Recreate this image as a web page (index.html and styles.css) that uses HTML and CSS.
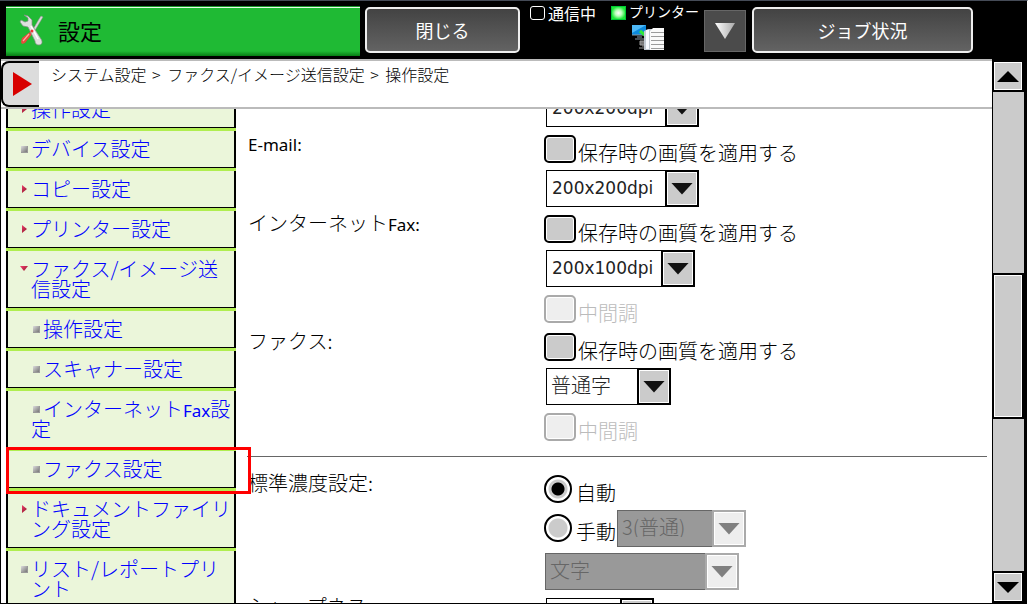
FILE: index.html
```html
<!DOCTYPE html>
<html lang="ja">

<head>
  <meta charset="UTF-8">
  <meta name="viewport" content="width=device-width, initial-scale=1.0">
  <title>設定</title>
  <link rel="stylesheet" href="styles.css">
</head>

<body>
  <header class="topbar">
    <div class="title">
      <svg class="title-icon" width="26" height="32" viewBox="0 0 26 32">
        <path d="M6 29l-2-1 12-17 2 1z" fill="#159a27"/>
        <path d="M20 5l2-3 2 1-9 15-2-1z" fill="#d9d9d9" stroke="#8d8d8d" stroke-width=".5"/>
        <path d="M11 18l3 1-8 10-3 1-1-2 1-4z" fill="#e84a3c"/>
        <path d="M10 20l-6 7" stroke="#ffaaa0" stroke-width="1.2"/>
        <path d="M5 1l4 1 4 4 0 5 9 14c2 3 1 6-2 6-3 0-4-2-4-4L9 13 4 12 1 8l1-2 4 2 3-1 0-3z" fill="#dfe1df" stroke="#858d85" stroke-width=".7"/>
        <path d="M12 12l7 13" stroke="#fff" stroke-width="1.5"/>
        <circle cx="13" cy="17" r="1.5" fill="#e33"/>
      </svg>
      <h1>設定</h1>
    </div>
    <button class="key key-close" type="button">閉じる</button>
    <div class="status">
      <div class="status-item"><span class="lamp"></span>通信中</div>
      <div class="status-item status-printer">
        <div class="status-name"><span class="lamp lamp-on"></span>プリンター</div>
        <svg class="job-icon" width="34" height="28" viewBox="0 0 34 28">
          <path d="M1 1h14v10H1z" fill="#0c89dc"/>
          <path d="M1 1h14L1 9z" fill="#4db8f7"/>
          <path d="M1 11h14M6 13h5M4 15h9" stroke="#8a9aa5" stroke-width="1"/>
          <path d="M9 7l6 5" stroke="#2ee83a" stroke-width="3"/>
          <path d="M9 17h5v4H9zM11 22h3M8 24h6" fill="#777" stroke="#999" stroke-width="1"/>
          <path d="M13 7l4-2h4v21h-8z" fill="#c3cbd3"/>
          <path d="M15 6h3v19h-3z" fill="#f8fbff"/>
          <path d="M22 4h11v22H19V7z" fill="#fafafa"/>
          <path d="M20 8.500h13M20 12.500h13M20 16.500h13M20 20.500h13M20 24.500h13" stroke="#9b9b9b" stroke-width="1"/>
        </svg>
      </div>
    </div>
    <button class="key-down" type="button" aria-label="プリンターの一覧">
      <svg width="20" height="16" viewBox="0 0 20 16">
        <defs>
          <linearGradient id="silver" x1="0" y1="0" x2="1" y2="0">
            <stop offset="0" stop-color="#fff"/>
            <stop offset="1" stop-color="#aaa"/>
          </linearGradient>
        </defs>
        <path d="M0 0h20L10 16z" fill="url(#silver)"/>
      </svg>
    </button>
    <button class="key key-job" type="button">ジョブ状況</button>
  </header>

  <div class="screen">
    <div class="page">
      <div class="pathbar">
        <button class="menu-toggle" type="button" aria-label="メニュー">
          <svg width="19" height="24" viewBox="0 0 19 24">
            <path d="M0 0l19 12L0 24z" fill="#d80000"/>
          </svg>
        </button>
        <p>システム設定 <span class="sep">&gt;</span> ファクス/イメージ送信設定 <span class="sep">&gt;</span> 操作設定</p>
      </div>

      <main class="content">
        <nav class="menu">
          <ul>
            <li><a href="#"><i class="mark closed"></i>操作設定</a></li>
            <li><a href="#"><i class="mark leaf"></i>デバイス設定</a></li>
            <li><a href="#"><i class="mark closed"></i>コピー設定</a></li>
            <li><a href="#"><i class="mark closed"></i>プリンター設定</a></li>
            <li><a href="#"><i class="mark open"></i>ファクス/イメージ送信設定</a></li>
            <li class="sub"><a href="#"><i class="mark leaf"></i>操作設定</a></li>
            <li class="sub"><a href="#"><i class="mark leaf"></i>スキャナー設定</a></li>
            <li class="sub"><a href="#"><i class="mark leaf"></i>インターネット<span class="latin">Fax</span>設定</a></li>
            <li class="sub current"><a href="#"><i class="mark leaf"></i>ファクス設定</a></li>
            <li><a href="#"><i class="mark closed"></i>ドキュメントファイリング設定</a></li>
            <li><a href="#"><i class="mark leaf"></i>リスト/レポートプリント</a></li>
          </ul>
        </nav>

        <form class="settings">
          <div class="row">
            <div class="name"></div>
            <div class="fields">
              <span class="drop">
                <select class="w-large" aria-label="解像度"><option>200x200dpi</option></select>
                <span class="arrow"></span>
              </span>
            </div>
          </div>
          <div class="row">
            <div class="name"><span class="latin">E-mail:</span></div>
            <div class="fields">
              <label class="check"><input type="checkbox"><span>保存時の画質を適用する</span></label>
              <span class="drop">
                <select class="w-large" aria-label="E-mail"><option>200x200dpi</option></select>
                <span class="arrow"></span>
              </span>
            </div>
          </div>
          <div class="row">
            <div class="name">インターネット<span class="latin">Fax:</span></div>
            <div class="fields">
              <label class="check"><input type="checkbox"><span>保存時の画質を適用する</span></label>
              <span class="drop">
                <select class="w-medium" aria-label="インターネットFax"><option>200x100dpi</option></select>
                <span class="arrow"></span>
              </span>
              <label class="check"><input type="checkbox" disabled><span>中間調</span></label>
            </div>
          </div>
          <div class="row">
            <div class="name">ファクス:</div>
            <div class="fields">
              <label class="check"><input type="checkbox"><span>保存時の画質を適用する</span></label>
              <span class="drop">
                <select class="w-small kana" aria-label="ファクス"><option>普通字</option></select>
                <span class="arrow"></span>
              </span>
              <label class="check"><input type="checkbox" disabled><span>中間調</span></label>
            </div>
          </div>
          <hr>
          <div class="row">
            <div class="name">標準濃度設定:</div>
            <div class="fields density">
              <label class="radio"><input type="radio" name="density" checked><span>自動</span></label>
              <div class="manual">
                <label class="radio"><input type="radio" name="density"><span>手動</span></label>
                <span class="drop">
                  <select class="w-level kana" aria-label="濃度" disabled><option>3(普通)</option></select>
                  <span class="arrow"></span>
                </span>
              </div>
              <span class="drop">
                <select class="w-wide kana" aria-label="原稿" disabled><option>文字</option></select>
                <span class="arrow"></span>
              </span>
            </div>
          </div>
          <div class="row">
            <div class="name">シャープネス:</div>
            <div class="fields">
              <span class="drop">
                <select class="w-tiny kana" aria-label="シャープネス"><option></option></select>
                <span class="arrow"></span>
              </span>
            </div>
          </div>
        </form>
      </main>
    </div>

    <div class="scroller">
      <button class="scroll-key" type="button" aria-label="上へ">
        <svg width="22" height="11" viewBox="0 0 22 11"><path d="M11 0l11 11H0z"/></svg>
      </button>
      <div class="track track-top"></div>
      <div class="thumb"></div>
      <div class="track track-bottom"></div>
      <button class="scroll-key" type="button" aria-label="下へ">
        <svg width="22" height="11" viewBox="0 0 22 11"><path d="M0 0h22L11 11z"/></svg>
      </button>
    </div>
  </div>
</body>

</html>
```
FILE: styles.css
```css
* {
  box-sizing: border-box;
}

body {
  display: flex;
  flex-direction: column;
  height: 100vh;
  margin: 0;
  overflow: hidden;
  background-color: #000;
  border-top: 1px solid #454b57;
  border-right: 1px solid #fff;
  color: #000;
  font-family: "Noto Sans CJK JP", sans-serif;
  font-weight: 300;
  font-size: 20px;
  line-height: 20px;
}

button,
input,
select {
  margin: 0;
  font: inherit;
  color: inherit;
  appearance: none;
  border-radius: 0;
}

.latin {
  font-family: "Noto Sans", sans-serif;
  font-size: 17px;
  font-weight: 400;
  line-height: 14px;
}

/* header */
.topbar {
  display: flex;
  align-items: flex-start;
  height: 58px;
  padding: 5px 54px 0 6px;
}

.title {
  flex: 1;
  display: flex;
  align-items: center;
  height: 50px;
  padding: 0 0 3px 13px;
  background: linear-gradient(#1fba34 90%, #067d14);
  border-top: 1px solid #19942a;
  box-shadow: inset 0 1px #e4ffe8;
}

.title h1 {
  margin: 0 0 0 13px;
  font-size: 22px;
  font-weight: 400;
  line-height: 24px;
}

.key {
  height: 46px;
  margin-top: 1px;
  background: linear-gradient(#434343, #636363);
  border: 2px solid #eee;
  border-radius: 5px;
  color: #fff;
  font-size: 18px;
  font-weight: 400;
}

.key-close {
  width: 155px;
  margin-left: 5px;
}

.key-job {
  width: 221px;
  margin-left: 6px;
}

.key-down {
  display: flex;
  align-items: center;
  justify-content: center;
  width: 42px;
  height: 42px;
  margin-top: 4px;
  padding: 0;
  background-color: #4b4b4b;
  border: 1px solid #666;
}

.status {
  display: flex;
  justify-content: space-between;
  width: 184px;
  padding: 0 5px 0 10px;
  color: #fff;
  font-weight: 400;
}

.status-item {
  display: flex;
  gap: 3px;
  height: 14px;
  font-size: 16px;
  line-height: 14px;
}

.status-printer {
  flex-direction: column;
  gap: 4px;
}

.status-name {
  display: flex;
  gap: 3px;
  font-size: 14px;
  line-height: 10px;
}

.lamp {
  width: 15px;
  height: 14px;
  border: 1px solid #fff;
  border-radius: 3px;
}

.lamp-on {
  border: 1px solid #0c3;
  border-radius: 0;
  background: radial-gradient(#fff, #baffba 35%, #1fe83a 75%);
}

.job-icon {
  flex: none;
  margin-left: 20px;
}

/* screen */
.screen {
  flex: 1;
  display: flex;
  min-height: 0;
  border-bottom: 1px solid #000;
}

.page {
  flex: 1;
  display: flex;
  flex-direction: column;
  min-width: 0;
  background-color: #fff;
  border-left: 1px solid #000;
}

.pathbar {
  display: flex;
  flex: none;
  height: 50px;
  border-top: 2px solid #bbb;
  border-bottom: 2px solid #bbb;
}

.pathbar p {
  margin: 3px 0 0 12px;
  font-size: 16px;
}

.sep {
  margin: 0 3px 0 2px;
}

.menu-toggle {
  width: 38px;
  padding: 0 0 0 10px;
  background-color: #dcdcdc;
  border: 2px solid #000;
  border-right: 0;
  border-radius: 8px 0 0 8px;
  text-align: left;
}

.menu-toggle svg {
  display: block;
}

.content {
  flex: 1;
  display: flex;
  align-items: flex-start;
  min-height: 0;
  overflow: hidden;
}

/* menu, scrolled partly under the path bar */
.menu {
  flex: none;
  width: 230px;
  margin: -21px 12px 0 5px;
}

.menu ul {
  margin: 0;
  padding: 0;
  list-style: none;
}

.menu li {
  border-top: 3px solid #b0ee50;
}

.menu a {
  display: block;
  padding: 8px 0 8px 23px;
  background-color: #ebf6da;
  border: 2px solid #000;
  border-width: 0 2px 1px;
  color: #00f;
  text-decoration: none;
  text-indent: -11px;
  word-break: break-all;
}

.menu .sub a {
  text-indent: 1px;
}

.mark {
  display: inline-block;
  width: 8px;
  height: 8px;
  margin-right: 3px;
  vertical-align: 4px;
}

.leaf {
  background: linear-gradient(135deg, #ddd, #777);
  border: 1px solid #999;
  border-width: 0 1px 1px 0;
  width: 7px;
  height: 7px;
  margin-left: 1px;
}

.closed {
  background: linear-gradient(135deg, #f47, #801020);
  clip-path: polygon(2px 0, 7px 4px, 2px 8px);
}

.open {
  background: linear-gradient(135deg, #f47, #801020);
  clip-path: polygon(0 1px, 8px 1px, 4px 6px);
}

.current {
  position: relative;
}

.current::after {
  content: "";
  position: absolute;
  z-index: 1;
  top: -4px;
  right: -15px;
  bottom: -6px;
  left: 0;
  border: 3px solid #f00;
  pointer-events: none;
}

/* settings */
.settings {
  flex: 1;
  margin: -19px 5px 0 0;
}

.row {
  display: grid;
  grid-template-columns: 296px 1fr;
  margin-bottom: 8px;
}

.name {
  margin-top: -2px;
}

.fields {
  display: flex;
  flex-direction: column;
  align-items: flex-start;
}

.drop {
  display: flex;
  height: 37px;
  margin-left: 2px;
}

.drop select {
  padding: 0 0 2px 5px;
  background-color: #fff;
  border: 1px solid #000;
  border-right: 0;
  color: #222;
  font-family: "DejaVu Sans", sans-serif;
  font-size: 17px;
  font-weight: 400;
  opacity: 1;
}

.drop .kana {
  padding: 0 0 3px 4px;
  font-family: inherit;
  font-size: 20px;
  font-weight: 300;
}

.w-large { width: 119px; }
.w-medium { width: 115px; }
.w-small { width: 91px; }
.w-level { width: 95px; }
.w-wide { width: 160px; }
.w-tiny { width: 74px; }

.arrow {
  display: flex;
  align-items: center;
  justify-content: center;
  width: 34px;
  background-color: #cbcbcb;
  border: 2px solid #000;
  box-shadow: inset 0 0 0 1px #fff;
}

.arrow::before {
  content: "";
  width: 22px;
  height: 12px;
  background-color: #111;
  clip-path: polygon(0 0, 100% 0, 50% 100%);
}

.drop select:disabled {
  background-color: #999;
  border-color: #666;
  color: #666;
}

select:disabled + .arrow {
  background-color: #eee;
  border-color: #aaa;
}

select:disabled + .arrow::before {
  background-color: #808080;
}

.check {
  display: flex;
  align-items: flex-start;
  gap: 2px;
  height: 30px;
  margin-bottom: 5px;
}

.check span {
  margin-top: 8px;
}

.drop + .check {
  margin: 8px 0 0;
}

.check input {
  width: 32px;
  height: 28px;
  background-color: #cbcbcb;
  border: 2px solid #000;
  border-radius: 5px;
  box-shadow: inset 0 0 0 1px #fff;
}

.check input:disabled {
  background-color: #eee;
  border-color: #aaa;
}

.check input:disabled + span {
  color: #bbb;
}

hr {
  height: 1px;
  margin: 13px 0 18px -1px;
  background-color: #666;
  border: 0;
}

.radio {
  display: flex;
  gap: 4px;
}

.radio input {
  width: 28px;
  height: 28px;
  background: radial-gradient(#cbcbcb 9px, #fff 10px);
  border: 2px solid #000;
  border-radius: 50%;
}

.radio input:checked {
  background: radial-gradient(#000 6px, #cbcbcb 7px, #cbcbcb 9px, #fff 10px);
}

.radio span {
  margin-top: 8px;
}

.density {
  gap: 6px;
}

.density > .radio {
  height: 29px;
}

.density .drop {
  margin-left: 1px;
}

.manual {
  display: flex;
}

.manual .radio {
  padding-top: 4px;
}

/* scroll bar */
.scroller {
  flex: none;
  display: flex;
  flex-direction: column;
  width: 35px;
  padding: 1px 3px 0 0;
}

.scroll-key,
.thumb {
  flex: none;
  background-color: #cbcbcb;
  border: 2px solid #000;
  box-shadow: inset 0 0 0 1px #fff;
}

.scroll-key {
  display: flex;
  align-items: center;
  justify-content: center;
  height: 32px;
  padding: 0;
}

.thumb {
  height: 146px;
}

.track {
  margin-left: 1px;
  background-color: #cbcbcb;
}

.track-top {
  flex: 180;
}

.track-bottom {
  flex: 152;
}
```
